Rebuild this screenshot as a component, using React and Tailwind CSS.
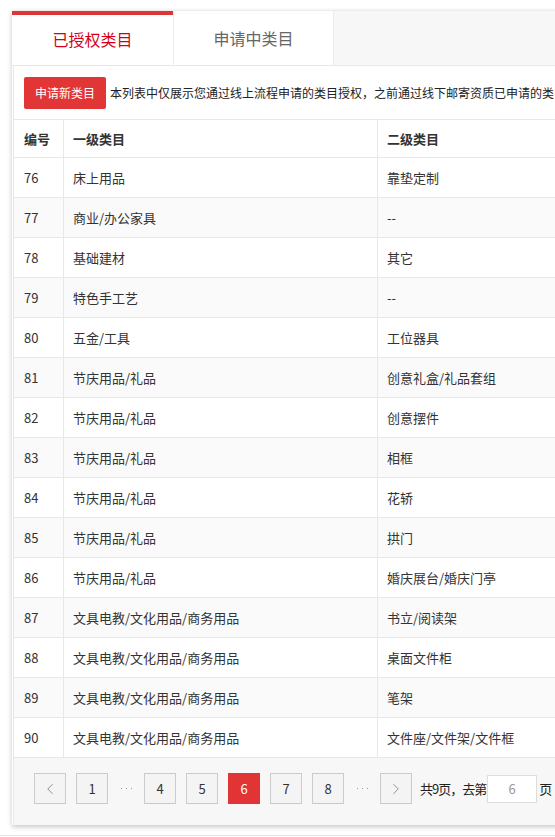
import React from 'react';
import { ChevronLeft, ChevronRight } from 'lucide-react';

const rows = [
  ['76', '床上用品', '靠垫定制'],
  ['77', '商业/办公家具', '--'],
  ['78', '基础建材', '其它'],
  ['79', '特色手工艺', '--'],
  ['80', '五金/工具', '工位器具'],
  ['81', '节庆用品/礼品', '创意礼盒/礼品套组'],
  ['82', '节庆用品/礼品', '创意摆件'],
  ['83', '节庆用品/礼品', '相框'],
  ['84', '节庆用品/礼品', '花轿'],
  ['85', '节庆用品/礼品', '拱门'],
  ['86', '节庆用品/礼品', '婚庆展台/婚庆门亭'],
  ['87', '文具电教/文化用品/商务用品', '书立/阅读架'],
  ['88', '文具电教/文化用品/商务用品', '桌面文件柜'],
  ['89', '文具电教/文化用品/商务用品', '笔架'],
  ['90', '文具电教/文化用品/商务用品', '文件座/文件架/文件框'],
];

const PageBtn = ({ children, active }) => (
  <div
    className={
      active
        ? 'w-[32px] h-[31px] flex items-center justify-center bg-[#e23434] text-white text-[13px]'
        : 'w-[32px] h-[31px] flex items-center justify-center border border-[#cbcbcb] bg-[#f4f4f4] text-[#333] text-[13px]'
    }
  >
    {children}
  </div>
);

// the three little dots between page buttons
const Dots = () => (
  <div className="w-[16px] h-[31px] flex items-center justify-center gap-[4px]">
    <span className="w-px h-px bg-[#999]" />
    <span className="w-px h-px bg-[#999]" />
    <span className="w-px h-px bg-[#999]" />
  </div>
);

export default function App() {
  return (
    <div
      className="w-[555px] h-[837px] overflow-hidden bg-white relative"
      style={{ fontFamily: '"Noto Sans CJK SC", "Microsoft YaHei", sans-serif' }}
    >
      <div className="pt-[10px] pl-[12px]">
        <div className="w-[720px] bg-white border-t border-[#ececec] shadow-[0_2px_5px_rgba(0,0,0,0.22)]">
          {/* tabs */}
          <div className="flex h-[55px] bg-[#f7f7f7] border-b border-[#e8e8e8]">
            <div className="w-[161px] bg-white border-t-[4px] border-[#e03535] flex items-center justify-center text-[16px] text-[#d4001b] pb-[3px]">
              已授权类目
            </div>
            <div className="w-[161px] bg-white border-l border-r border-[#ececec] flex items-center justify-center text-[16px] text-[#666]">
              申请中类目
            </div>
          </div>

          <div className="ml-px border-l border-[#e8e8e8]">
            {/* notice */}
            <div className="h-[54px] border-b border-[#e8e8e8] flex items-start pt-[11px] pl-[10px]">
              <div className="h-[32px] px-[11px] flex items-center bg-[#e23535] text-white text-[12px] rounded-[2px] shrink-0">
                申请新类目
              </div>
              <div className="ml-[4px] h-[32px] flex items-center text-[12px] text-[#222] whitespace-nowrap">
                本列表中仅展示您通过线上流程申请的类目授权，之前通过线下邮寄资质已申请的类目不在此列表中展示
              </div>
            </div>

            {/* header */}
            <div className="flex h-[38px] border-b border-[#e8e8e8] text-[13px] font-semibold text-[#333]">
              <div className="w-[50px] border-r border-[#e8e8e8] pl-[10px] flex items-center">编号</div>
              <div className="w-[314px] border-r border-[#e8e8e8] pl-[9px] flex items-center">一级类目</div>
              <div className="flex-1 pl-[9px] flex items-center">二级类目</div>
            </div>

            {/* rows */}
            {rows.map((r, i) => (
              <div
                key={r[0]}
                className={
                  'flex h-[40px] border-b border-[#e8e8e8] text-[13px] text-[#333] ' +
                  (i % 2 === 1 ? 'bg-[#fafafa]' : 'bg-white')
                }
              >
                <div className="w-[50px] border-r border-[#e8e8e8] pl-[10px] flex items-center">{r[0]}</div>
                <div className="w-[314px] border-r border-[#e8e8e8] pl-[9px] flex items-center">{r[1]}</div>
                <div className="flex-1 pl-[9px] flex items-center">{r[2]}</div>
              </div>
            ))}

            {/* pagination */}
            <div className="h-[67px] bg-[#f7f7f7] flex items-start pt-[15px] pl-[20px] gap-[10px]">
              <PageBtn>
                <ChevronLeft className="w-[18px] h-[20px] text-[#6f7a8a]" strokeWidth={1.1} />
              </PageBtn>
              <PageBtn>1</PageBtn>
              <Dots />
              <PageBtn>4</PageBtn>
              <PageBtn>5</PageBtn>
              <PageBtn active>6</PageBtn>
              <PageBtn>7</PageBtn>
              <PageBtn>8</PageBtn>
              <Dots />
              <PageBtn>
                <ChevronRight className="w-[18px] h-[20px] text-[#8a7a66]" strokeWidth={1.1} />
              </PageBtn>
              <div className="flex items-center h-[31px] -ml-[2px] text-[13px] text-[#222] whitespace-nowrap">
                <span className="tracking-[-1px]">共9页，去第</span>
                <div className="ml-px w-[50px] h-[28px] border border-[#ddd] bg-white flex items-center justify-center text-[#999] text-[13px]">
                  6
                </div>
                <span className="ml-[2px]">页</span>
              </div>
            </div>
          </div>
        </div>
      </div>
      <div className="absolute left-0 right-0 top-[835px] h-px bg-[#dfe2e8]" />
    </div>
  );
}
